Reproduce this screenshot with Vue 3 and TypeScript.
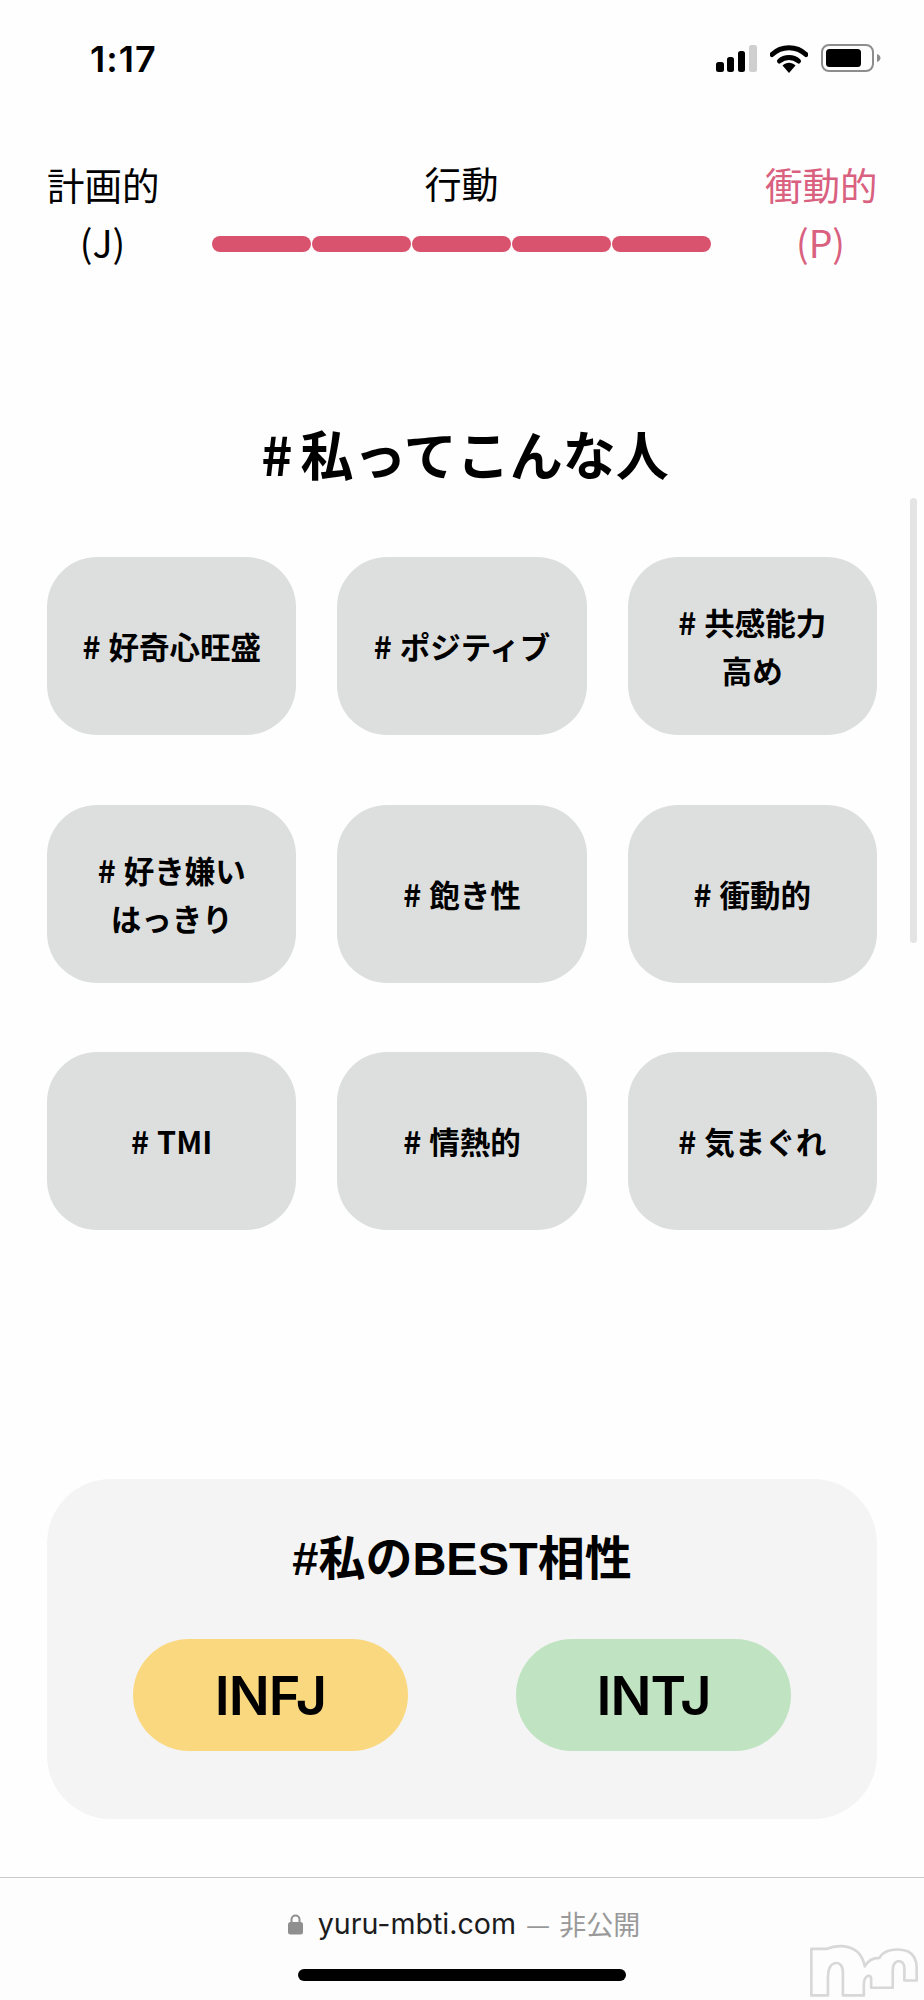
<script setup lang="ts">
const tags: string[][] = [
  ['好奇心旺盛'],
  ['ポジティブ'],
  ['共感能力', '高め'],
  ['好き嫌い', 'はっきり'],
  ['飽き性'],
  ['衝動的'],
  ['TMI'],
  ['情熱的'],
  ['気まぐれ'],
]
const segments = [1, 2, 3, 4, 5]
</script>

<template>
  <div class="page">
    <header class="status">
      <span class="time">1:17</span>
      <div class="status-icons">
        <svg class="signal" width="41" height="27" viewBox="0 0 41 27">
          <rect x="0" y="17" width="8" height="10" rx="2.5" fill="#000" />
          <rect x="11" y="12" width="7" height="15" rx="2.5" fill="#000" />
          <rect x="22" y="6" width="7" height="21" rx="2.5" fill="#000" />
          <rect x="33" y="0" width="8" height="27" rx="2.5" fill="#cfcfcf" />
        </svg>
        <svg class="wifi" width="38" height="29" viewBox="0 0 38 29">
          <path d="M2 10.500C11.500 1.500 26.500 1.500 36 10.500" fill="none" stroke="#000" stroke-width="5" stroke-linecap="round" />
          <path d="M9.500 17C14.800 12.300 23.200 12.300 28.500 17" fill="none" stroke="#000" stroke-width="5" stroke-linecap="round" />
          <path d="M12.500 21.500C16.500 17.800 21.500 17.800 25.500 21.500L19 29Z" fill="#000" />
        </svg>
        <svg class="battery" width="60" height="28" viewBox="0 0 60 28">
          <rect x="1" y="1" width="51" height="26" rx="7" fill="none" stroke="#8d8d8d" stroke-width="2" />
          <rect x="5" y="5" width="35" height="18" rx="3.500" fill="#000" />
          <path d="M56 10C58.500 11 59.500 12.500 59.500 14S58.500 17 56 18Z" fill="#8d8d8d" />
        </svg>
      </div>
    </header>

    <section class="scale">
      <div class="pole">計画的<br />(J)</div>
      <div class="meter">
        <div class="meter-title">行動</div>
        <div class="bar">
          <span v-for="s in segments" :key="s" class="segment"></span>
        </div>
      </div>
      <div class="pole active">衝動的<br />(P)</div>
    </section>

    <h2 class="heading"><span class="hash">#</span>私ってこんな人</h2>

    <section class="tags">
      <div v-for="(tag, i) in tags" :key="i" class="tag">
        <div v-for="(line, j) in tag" :key="j">
          <span v-if="j === 0" class="tag-hash">#</span>{{ line }}
        </div>
      </div>
    </section>

    <section class="best">
      <h3 class="best-title">#私のBEST相性</h3>
      <div class="best-row">
        <div class="pill yellow">INFJ</div>
        <div class="pill green">INTJ</div>
      </div>
    </section>

    <footer class="browser">
      <div class="address">
        <svg class="lock" width="15" height="22" viewBox="0 0 15 22">
          <path d="M3.500 10V6.500a4 4 0 0 1 8 0V10" fill="none" stroke="#8f8f8f" stroke-width="2" />
          <rect x="0" y="9" width="15" height="12.500" rx="2.500" fill="#8f8f8f" />
        </svg>
        <span class="domain">yuru-mbti.com</span>
        <span class="private">— 非公開</span>
      </div>
      <div class="home-bar"></div>
    </footer>

    <div class="scrollbar"></div>
    <svg class="watermark" width="113" height="57" viewBox="85 185 340 170">
      <path
        d="M95 205H140C165 195 205 190 235 215C245 225 252 240 256 258C265 240 280 232 300 232C310 210 350 200 385 212C405 222 412 240 412 262V300H375V262C375 248 365 240 355 242C345 245 340 255 340 270V322H275V295C275 285 265 283 260 290C255 295 253 305 253 315V345H190V275C190 255 180 245 165 248C150 252 145 270 145 290V345H95Z"
        fill="none"
        stroke="#d8d8d8"
        stroke-width="8"
        stroke-linejoin="round"
      />
    </svg>
  </div>
</template>

<style>
html,
body {
  margin: 0;
  background: #fefefe;
}
</style>

<style scoped>
.page {
  position: relative;
  width: 924px;
  height: 2000px;
  overflow: hidden;
  display: flex;
  flex-direction: column;
  background: #fefefe;
  color: #000;
  font-family: "Noto Sans CJK JP", sans-serif;
}
.status {
  height: 116px;
  flex: none;
  box-sizing: border-box;
  padding: 43px 43px 0 90px;
  display: flex;
  justify-content: space-between;
  align-items: flex-start;
}
.time {
  font-family: Inter, sans-serif;
  font-weight: 600;
  font-size: 36px;
  line-height: 32px;
  letter-spacing: 1px;
}
.status-icons {
  display: flex;
  align-items: flex-start;
  gap: 13px;
  padding-top: 1px;
}
.signal {
  margin-top: 1px;
}
.scale {
  flex: none;
  height: 170px;
  box-sizing: border-box;
  padding: 39px 48px 0 47px;
  display: flex;
  gap: 54px;
  align-items: flex-start;
}
.pole {
  width: 111px;
  text-align: center;
  font-size: 37.5px;
  line-height: 58px;
  white-space: nowrap;
}
.pole.active {
  color: #d9607f;
}
.meter {
  flex: 1;
  padding-top: 3px;
  display: flex;
  flex-direction: column;
  align-items: center;
}
.meter-title {
  font-size: 37px;
  line-height: 50px;
}
.bar {
  margin-top: 28px;
  width: 100%;
  display: flex;
  gap: 1px;
}
.segment {
  flex: 1;
  height: 16px;
  border-radius: 8px;
  background: #d9536f;
}
.heading {
  flex: none;
  margin: 131px 0 0;
  padding-left: 6px;
  text-align: center;
  font-size: 53px;
  font-weight: 700;
  line-height: 72px;
  height: 72px;
}
.hash {
  margin-right: 8px;
}
.tags {
  flex: none;
  margin: 68px 47px 0;
  display: grid;
  grid-template-columns: repeat(3, 1fr);
  column-gap: 41px;
  row-gap: 69.5px;
}
.tag {
  height: 178px;
  border-radius: 50px;
  background: #dddfdf;
  display: flex;
  flex-direction: column;
  align-items: center;
  justify-content: center;
  font-size: 30.5px;
  font-weight: 700;
  line-height: 48px;
}
.tag-hash {
  margin-right: 8px;
}
.best {
  flex: none;
  margin: 249px 47px 0;
  height: 340px;
  box-sizing: border-box;
  padding-top: 50px;
  border-radius: 64px;
  background: #f4f4f5;
}
.best-title {
  margin: 0;
  text-align: center;
  font-family: "Liberation Sans", "Noto Sans CJK JP", sans-serif;
  font-size: 47px;
  font-weight: 700;
  line-height: 60px;
}
.best-row {
  margin-top: 50px;
  padding: 0 86px;
  display: flex;
  justify-content: space-between;
}
.pill {
  width: 275px;
  height: 112px;
  border-radius: 56px;
  display: flex;
  align-items: center;
  justify-content: center;
  font-family: Inter, sans-serif;
  font-size: 54px;
  font-weight: 600;
  letter-spacing: -1px;
}
.yellow {
  background: #fad87f;
}
.green {
  background: #c0e3c1;
}
.browser {
  flex: none;
  margin-top: 58px;
  height: 122px;
  box-sizing: border-box;
  border-top: 1px solid #c9c9cb;
  background: #fdfdfd;
  display: flex;
  flex-direction: column;
  align-items: center;
  padding-top: 26px;
}
.address {
  display: flex;
  align-items: center;
  height: 40px;
  padding-left: 4px;
  font-family: Inter, sans-serif;
  font-size: 28.6px;
  line-height: 40px;
}
.lock {
  margin-right: 15px;
}
.domain {
  color: #1c1c1e;
}
.private {
  margin-left: 10px;
  color: #999;
  font-family: "Noto Sans CJK JP", sans-serif;
  font-size: 27px;
  word-spacing: 3px;
}
.home-bar {
  margin-top: 25px;
  width: 328px;
  height: 12px;
  border-radius: 6px;
  background: #000;
}
.scrollbar {
  position: absolute;
  left: 910px;
  top: 498px;
  width: 7px;
  height: 445px;
  border-radius: 4px;
  background: #e4e4e4;
}
.watermark {
  position: absolute;
  left: 808px;
  top: 1942px;
}
</style>
